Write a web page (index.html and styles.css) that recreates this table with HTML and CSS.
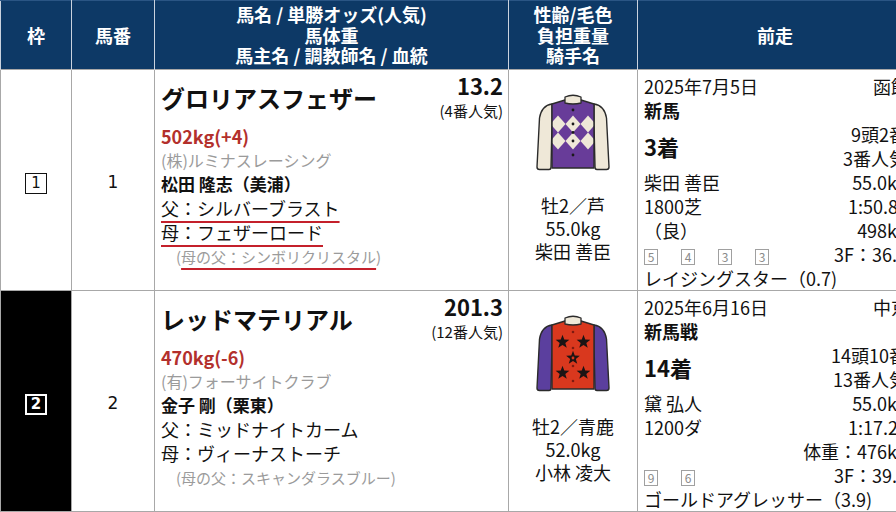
FILE: index.html
```html
<!DOCTYPE html>
<html lang="ja">
<head>
<meta charset="utf-8">
<title>出馬表</title>
<link rel="stylesheet" href="styles.css">
</head>
<body>
<table class="race">
  <colgroup>
    <col class="c-waku"><col class="c-uma"><col class="c-name"><col class="c-sex"><col class="c-prev">
  </colgroup>
  <thead>
    <tr>
      <th>枠</th>
      <th>馬番</th>
      <th>馬名 / 単勝オッズ(人気)<br>馬体重<br>馬主名 / 調教師名 / 血統</th>
      <th>性齢/毛色<br>負担重量<br>騎手名</th>
      <th>前走</th>
    </tr>
  </thead>
  <tbody>
    <tr>
      <td class="waku waku-1"><span class="waku-box">1</span></td>
      <td class="umaban">1</td>
      <td class="horse">
        <div class="horse-top">
          <div class="horse-name">グロリアスフェザー</div>
          <div class="odds">
            <div class="odds-val">13.2</div>
            <div class="odds-pop">(4番人気)</div>
          </div>
        </div>
        <div class="weight">502kg(+4)</div>
        <div class="owner">(株)ルミナスレーシング</div>
        <div class="trainer">松田 隆志（美浦）</div>
        <div class="blood"><span class="ul">父：シルバーブラスト</span></div>
        <div class="blood"><span class="ul">母：フェザーロード</span></div>
        <div class="damsire">(<span class="ul">母の父：シンボリクリスタル</span>)</div>
      </td>
      <td class="jockey">
        <svg class="silks" viewBox="0 0 74 78" width="74" height="78">
          <defs>
            <clipPath id="body1"><path d="M29,6 L16,10 L16,74 L58,74 L58,10 L45,6 Z"/></clipPath>
          </defs>
          <path d="M16,10 C9,11 5,15 3.5,24 L1,73 Q1,75.5 3.5,75.5 L13,75.5 Q15,75.5 15,73 L16,30 Z" fill="#efe8d8" stroke="#2b2b2b" stroke-width="1.4" stroke-linejoin="round"/>
          <path d="M58,10 C65,11 69,15 70.5,24 L73,73 Q73,75.5 70.5,75.5 L61,75.5 Q59,75.5 59,73 L58,30 Z" fill="#efe8d8" stroke="#2b2b2b" stroke-width="1.4" stroke-linejoin="round"/>
          <path d="M29,6 L16,10 L16,74 L58,74 L58,10 L45,6 Z" fill="#683c99"/>
          <g clip-path="url(#body1)" fill="#efe8d8">
            <polygon points="22,21.5 29.5,30 22,38.5 14.5,30"/>
            <polygon points="37,21.5 44.5,30 37,38.5 29.5,30"/>
            <polygon points="52,21.5 59.5,30 52,38.5 44.5,30"/>
            <polygon points="22,38.5 29.5,47 22,55.5 14.5,47"/>
            <polygon points="37,38.5 44.5,47 37,55.5 29.5,47"/>
            <polygon points="52,38.5 59.5,47 52,55.5 44.5,47"/>
          </g>
          <path d="M29,6 L16,10 L16,74 L58,74 L58,10 L45,6 Z" fill="none" stroke="#2b2b2b" stroke-width="1.4" stroke-linejoin="round"/>
          <path d="M29,9 L29,3 Q37,-0.5 45,3 L45,9 Q37,11 29,9 Z" fill="#efe8d8" stroke="#2b2b2b" stroke-width="1.3" stroke-linejoin="round"/>
          <g fill="#1a1a1a">
            <circle cx="37" cy="16" r="1.4"/>
            <circle cx="37" cy="30" r="1.4"/>
            <circle cx="37" cy="38.5" r="1.4"/>
            <circle cx="37" cy="47" r="1.4"/>
            <circle cx="37" cy="61" r="1.4"/>
          </g>
        </svg>
        <div class="jk-line">牡2／芦</div>
        <div class="jk-line">55.0kg</div>
        <div class="jk-line">柴田 善臣</div>
      </td>
      <td class="prev">
        <div class="prev-grid">
          <div class="pl">2025年7月5日</div><div class="pr venue">函館</div>
          <div class="pl b">新馬</div><div class="pr"></div>
          <div class="pl rank">3着</div><div class="pr">9頭2番</div>
          <div class="pr">3番人気</div>
          <div class="pl">柴田 善臣</div><div class="pr">55.0kg</div>
          <div class="pl">1800芝</div><div class="pr time">1:50.8</div>
          <div class="pl">（良）</div><div class="pr">498kg</div>
          <div class="pl"><span class="pos">5</span><span class="pos">4</span><span class="pos">3</span><span class="pos">3</span></div><div class="pr">3F：36.5</div>
          <div class="pfull">レイジングスター（0.7)</div>
        </div>
      </td>
    </tr>
    <tr>
      <td class="waku waku-2"><span class="waku-box">2</span></td>
      <td class="umaban">2</td>
      <td class="horse">
        <div class="horse-top">
          <div class="horse-name">レッドマテリアル</div>
          <div class="odds">
            <div class="odds-val">201.3</div>
            <div class="odds-pop">(12番人気)</div>
          </div>
        </div>
        <div class="weight">470kg(-6)</div>
        <div class="owner">(有)フォーサイトクラブ</div>
        <div class="trainer">金子 剛（栗東）</div>
        <div class="blood">父：ミッドナイトカーム</div>
        <div class="blood">母：ヴィーナストーチ</div>
        <div class="damsire">(母の父：スキャンダラスブルー)</div>
      </td>
      <td class="jockey">
        <svg class="silks" viewBox="0 0 74 78" width="74" height="78">
          <defs>
            <path id="star" d="M0,-7.2 L1.75,-2.4 L6.85,-2.23 L2.83,0.92 L4.23,5.83 L0,3 L-4.23,5.83 L-2.83,0.92 L-6.85,-2.23 L-1.75,-2.4 Z"/>
          </defs>
          <path d="M16,10 C9,11 5,15 3.5,24 L1,73 Q1,75.5 3.5,75.5 L13,75.5 Q15,75.5 15,73 L16,30 Z" fill="#5b3f9e" stroke="#2b2b2b" stroke-width="1.4" stroke-linejoin="round"/>
          <path d="M58,10 C65,11 69,15 70.5,24 L73,73 Q73,75.5 70.5,75.5 L61,75.5 Q59,75.5 59,73 L58,30 Z" fill="#5b3f9e" stroke="#2b2b2b" stroke-width="1.4" stroke-linejoin="round"/>
          <path d="M29,6 L16,10 L16,74 L58,74 L58,10 L45,6 Z" fill="#d9381e" stroke="#2b2b2b" stroke-width="1.4" stroke-linejoin="round"/>
          <g fill="#1c1414">
            <use href="#star" x="26.5" y="27"/>
            <use href="#star" x="47.5" y="27"/>
            <use href="#star" x="37" y="43"/>
            <use href="#star" x="26.5" y="58"/>
            <use href="#star" x="47.5" y="58"/>
          </g>
          <path d="M29,9 L29,3 Q37,-0.5 45,3 L45,9 Q37,11 29,9 Z" fill="#efe8d8" stroke="#2b2b2b" stroke-width="1.3" stroke-linejoin="round"/>
          <g fill="#7e1a10">
            <circle cx="37" cy="17" r="1.3"/>
            <circle cx="37" cy="33" r="1.3"/>
            <circle cx="37" cy="51" r="1.3"/>
            <circle cx="37" cy="66" r="1.3"/>
          </g>
          <circle cx="37" cy="43" r="1.4" fill="#d9381e"/>
        </svg>
        <div class="jk-line">牡2／青鹿</div>
        <div class="jk-line">52.0kg</div>
        <div class="jk-line">小林 凌大</div>
      </td>
      <td class="prev">
        <div class="prev-grid">
          <div class="pl">2025年6月16日</div><div class="pr venue">中京</div>
          <div class="pl b">新馬戦</div><div class="pr"></div>
          <div class="pl rank">14着</div><div class="pr">14頭10番</div>
          <div class="pr">13番人気</div>
          <div class="pl">黛 弘人</div><div class="pr">55.0kg</div>
          <div class="pl">1200ダ</div><div class="pr time">1:17.2</div>
          <div class="pl"></div><div class="pr">体重：476kg</div>
          <div class="pl"><span class="pos">9</span><span class="pos">6</span></div><div class="pr">3F：39.8</div>
          <div class="pfull">ゴールドアグレッサー（3.9)</div>
        </div>
      </td>
    </tr>
  </tbody>
</table>
</body>
</html>
```

FILE: styles.css
```css
html, body {
  margin: 0;
  padding: 0;
  overflow: hidden;
  background: #ffffff;
}

body {
  width: 896px;
  height: 512px;
  font-family: "Noto Sans CJK JP", "Noto Sans", sans-serif;
  color: #111111;
}

.race {
  border-collapse: collapse;
  table-layout: fixed;
  width: 912px;
}

.c-waku { width: 71px; }
.c-uma { width: 83px; }
.c-name { width: 354px; }
.c-sex { width: 129px; }
.c-prev { width: 275px; }

.race thead tr {
  height: 69px;
}

.race th {
  padding: 0;
  background: #0d3966;
  color: #ffffff;
  font-size: 18px;
  font-weight: 700;
  line-height: 20.5px;
  text-align: center;
  vertical-align: middle;
  border-left: 1px solid #c9d2de;
  border-right: 1px solid #c9d2de;
  border-top: 1px solid #2a5584;
}

.race tbody tr {
  height: 221px;
}

.race td {
  padding: 0;
  border: 1px solid #a8a8a8;
  vertical-align: top;
  font-size: 18px;
  line-height: 24px;
}

/* 枠 */
.race td.waku {
  text-align: center;
  vertical-align: middle;
}

.waku-1 { background: #ffffff; }
.waku-2 { background: #000000; }

.waku-box {
  display: inline-block;
  box-sizing: border-box;
  width: 22px;
  height: 21px;
  margin-top: 4px;
  font-family: "DejaVu Sans", sans-serif;
  font-size: 15px;
  line-height: 18px;
  text-align: center;
  vertical-align: middle;
}

.waku-1 .waku-box {
  border: 1.5px solid #111111;
  color: #111111;
}

.waku-2 .waku-box {
  border: 2px solid #ffffff;
  color: #ffffff;
  font-weight: 700;
  line-height: 17px;
}

/* 馬番 */
.race td.umaban {
  text-align: center;
  vertical-align: middle;
  padding-top: 4px;
  font-family: "DejaVu Sans", sans-serif;
  font-size: 17px;
}

/* 馬名 */
.race td.horse {
  padding: 2px 5px 0 6px;
}

.horse-top {
  display: flex;
  justify-content: space-between;
  align-items: center;
}

.horse-name {
  font-size: 24px;
  font-weight: 700;
  line-height: 30px;
}

.odds {
  text-align: right;
}

.odds-val {
  font-size: 22px;
  font-weight: 700;
  line-height: 26px;
}

.odds-pop {
  font-size: 15px;
  line-height: 26px;
}

.weight {
  color: #b3302c;
  font-weight: 700;
}

.owner {
  color: #9b9b9b;
  font-size: 16px;
}

.trainer {
  font-size: 17px;
  font-weight: 700;
}

.damsire {
  padding-left: 15px;
  color: #9b9b9b;
  font-size: 15px;
  line-height: 26px;
}

.ul {
  text-decoration: underline;
  text-decoration-color: #c4202b;
  text-decoration-thickness: 2px;
  text-underline-offset: 5px;
}

/* 性齢 / 騎手 */
.race td.jockey {
  padding-top: 24px;
  text-align: center;
}

.silks {
  display: block;
  margin: 0 auto 22px;
}

.jk-line {
  font-size: 18px;
  line-height: 23px;
}

/* 前走 */
.race td.prev {
  padding: 4px 5px 0 6px;
}

.prev-grid {
  display: grid;
  grid-template-columns: auto 1fr;
  line-height: 24px;
  white-space: nowrap;
}

.pl {
  grid-column: 1;
}

.pr {
  grid-column: 2;
  text-align: right;
}

.venue {
  margin-right: -2px;
}

.time {
  margin-right: 9px;
}

.b {
  font-weight: 700;
}

.rank {
  grid-row: span 2;
  align-self: center;
  font-size: 22px;
  font-weight: 700;
}

.pos {
  display: inline-block;
  box-sizing: border-box;
  width: 14px;
  height: 16px;
  margin-right: 23px;
  border: 1px solid #a0a0a0;
  color: #8a8a8a;
  font-size: 12px;
  line-height: 14px;
  text-align: center;
  vertical-align: middle;
}

.pfull {
  grid-column: 1 / -1;
}
```
